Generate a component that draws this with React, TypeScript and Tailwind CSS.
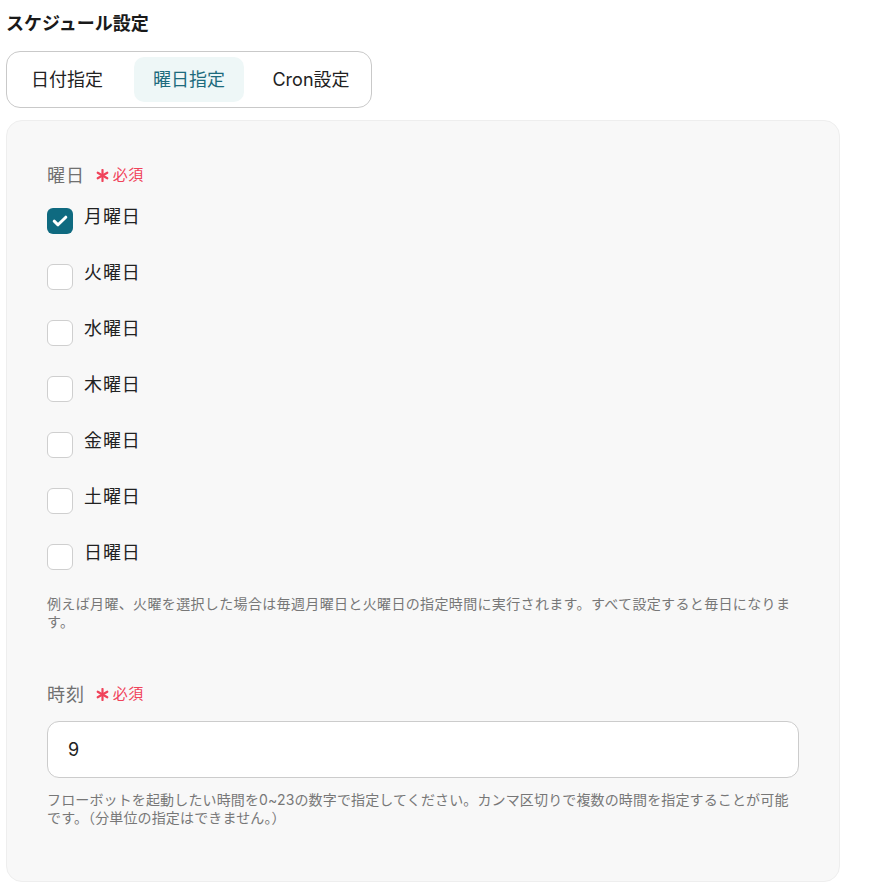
import { useState } from "react";

const days = ["月曜日", "火曜日", "水曜日", "木曜日", "金曜日", "土曜日", "日曜日"];
const tabs = ["日付指定", "曜日指定", "Cron設定"];

function Required() {
  return (
    <span className="ml-[11px] flex items-center text-[15px] tracking-[0.03em] text-[#f0435a]">
      <svg width="13" height="13" viewBox="0 0 13 13" className="mr-[4px]">
        <g stroke="#f0435a" strokeWidth="2.2" strokeLinecap="round">
          <path d="M6.5 1v11" />
          <path d="M1.7 3.7l9.6 5.6" />
          <path d="M1.7 9.3l9.6-5.6" />
        </g>
      </svg>
      必須
    </span>
  );
}

function Checkbox({ checked }: { checked: boolean }) {
  if (checked) {
    return (
      <span className="flex h-[26px] w-[26px] shrink-0 items-center justify-center rounded-[6px] bg-[#0f6a80]">
        <svg width="16" height="12" viewBox="0 0 16 12" fill="none">
          <path d="M2.2 6.2l3.8 3.6 7.8-7.6" stroke="white" strokeWidth="3" strokeLinecap="round" strokeLinejoin="round" />
        </svg>
      </span>
    );
  }
  return <span className="h-[26px] w-[26px] shrink-0 rounded-[6px] border border-[#cfcfcf] bg-white" />;
}

export default function App() {
  const [tab, setTab] = useState(1);
  const [checked] = useState<boolean[]>([true, false, false, false, false, false, false]);

  return (
    <div className="min-h-[886px] w-[886px] bg-white px-[6px] pt-[12px] font-['Inter','Noto_Sans_CJK_JP',sans-serif] text-[#222]">
      <h1 className="text-[18px] font-semibold leading-[24px] text-[#1a1a1a]">スケジュール設定</h1>

      <div className="mt-[15px] inline-flex gap-3 rounded-[14px] border border-[#c9c9c9] bg-white p-[5px]">
        {tabs.map((t, i) => (
          <button
            key={t}
            onClick={() => setTab(i)}
            className={
              i === tab
                ? "h-[45px] w-[110px] rounded-[10px] bg-[#eef7f7] text-[18px] text-[#1d6b7d]"
                : "h-[45px] w-[110px] rounded-[10px] text-[18px] text-[#222]"
            }
          >
            {t}
          </button>
        ))}
      </div>

      <div className="mt-3 w-[834px] rounded-[16px] border border-[#eeeeee] bg-[#f8f8f8] px-10 pb-[54px] pt-10">
        <div className="flex h-[28px] items-center">
          <span className="text-[18px] tracking-[0.05em] text-[#707070]">曜日</span>
          <Required />
        </div>

        <div className="mt-[19px] flex flex-col gap-[30px]">
          {days.map((d, i) => (
            <label key={d} className="flex items-start gap-[11px]">
              <Checkbox checked={checked[i]} />
              <span className="text-[18px] leading-[17px] tracking-[0.05em] text-[#222]">{d}</span>
            </label>
          ))}
        </div>

        <p className="mt-[25px] text-[14px] leading-[18px] tracking-[0.025em] text-[#777]">
          例えば月曜、火曜を選択した場合は毎週月曜日と火曜日の指定時間に実行されます。すべて設定すると毎日になります。
        </p>

        <div className="mt-[49px] flex h-[28px] items-center">
          <span className="text-[18px] tracking-[0.05em] text-[#707070]">時刻</span>
          <Required />
        </div>

        <div className="mt-[13px] flex h-[57px] w-full items-center rounded-[12px] border border-[#cccccc] bg-white px-[20px] text-[18px] text-[#222]">
          9
        </div>

        <p className="mt-[13px] text-[14px] leading-[18px] tracking-[0.01em] text-[#777]">
          フローボットを起動したい時間を0~23の数字で指定してください。カンマ区切りで複数の時間を指定することが可能です。（分単位の指定はできません。）
        </p>
      </div>
    </div>
  );
}
